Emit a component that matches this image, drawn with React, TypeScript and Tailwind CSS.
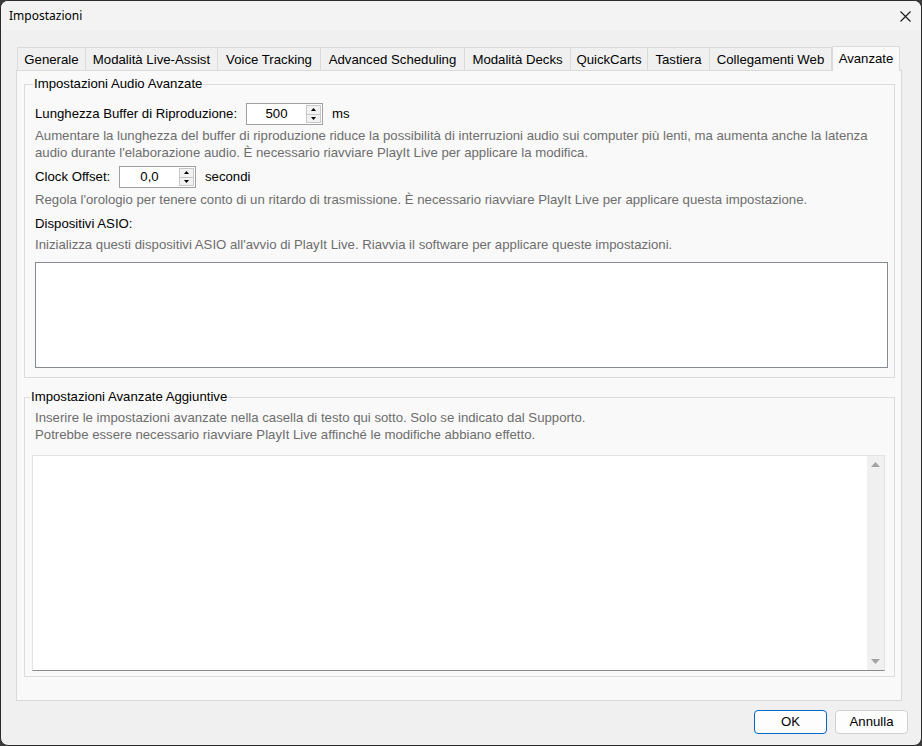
import React from "react";

const tabs: { label: string; w: number }[] = [
  { label: "Generale", w: 69 },
  { label: "Modalità Live-Assist", w: 132 },
  { label: "Voice Tracking", w: 103 },
  { label: "Advanced Scheduling", w: 144 },
  { label: "Modalità Decks", w: 106 },
  { label: "QuickCarts", w: 77 },
  { label: "Tastiera", w: 62 },
  { label: "Collegamenti Web", w: 122 },
];

function Arrow({ up, color = "#000", w = 7, h = 4 }: { up: boolean; color?: string; w?: number; h?: number }) {
  return (
    <svg width={w} height={h} viewBox={`0 0 ${w} ${h}`}>
      {up ? (
        <polygon points={`${w / 2},0 ${w},${h} 0,${h}`} fill={color} />
      ) : (
        <polygon points={`0,0 ${w},0 ${w / 2},${h}`} fill={color} />
      )}
    </svg>
  );
}

function Spin({ value }: { value: string }) {
  return (
    <div className="flex h-[22px] w-[77px] border border-[#a0a0a0] bg-white">
      <div className="flex flex-1 items-center justify-center text-black">{value}</div>
      <div className="my-[1px] mr-[1px] flex w-[15px] flex-col">
        <div className="flex flex-1 items-center justify-center border border-[#c8c8c8] bg-[#f2f2f2]">
          <Arrow up w={5} h={3} />
        </div>
        <div className="flex flex-1 items-center justify-center border border-t-0 border-[#c8c8c8] bg-[#f2f2f2]">
          <Arrow up={false} w={5} h={3} />
        </div>
      </div>
    </div>
  );
}

export default function App() {
  return (
    <div className="h-[746px] w-[922px] bg-[#3a3a3a] font-['Liberation_Sans',Arial,sans-serif] text-[13.2px] text-black">
      <div className="flex h-full flex-col overflow-hidden rounded-[8px] border border-[#2b2b2b] bg-[#f0f0f0]">
        {/* Title bar */}
        <div className="flex h-[30px] items-center justify-between bg-[#f3f3f3] pl-[8px] pr-[10px]">
          <span className="font-['Noto_Sans',sans-serif] text-[12px] leading-none text-black">Impostazioni</span>
          <svg width="11" height="11" viewBox="0 0 11 11">
            <path d="M0.5 0.5 L10.5 10.5 M10.5 0.5 L0.5 10.5" stroke="#1a1a1a" strokeWidth="1.1" fill="none" />
          </svg>
        </div>

        {/* Body */}
        <div className="flex flex-1 flex-col px-[15px] pt-[14px]">
          {/* Tabs */}
          <div className="relative z-10 flex h-[25px] items-end pl-[1px]">
            {tabs.map((t, i) => (
              <div
                key={t.label}
                style={{ width: t.w }}
                className={
                  "flex h-[23px] items-center justify-center border-t border-r border-[#dadada] bg-[#f0f0f0] pt-[1px] leading-none " +
                  (i === 0 ? "border-l" : "")
                }
              >
                {t.label}
              </div>
            ))}
            <div className="-mb-[1px] flex h-[25px] w-[68px] items-start justify-center border-x border-t border-[#dadada] bg-[#f9f9f9] pt-[5px] leading-none">
              Avanzate
            </div>
          </div>

          {/* Panel */}
          <div className="flex h-[631px] w-[886px] flex-col border border-[#dadada] bg-[#f9f9f9] pl-[7px] pr-[6px] pt-[5px]">
            {/* Group 1 */}
            <fieldset className="border border-[#dcdcdc] pb-[9px] pl-[10px] pr-[6px]">
              <legend className="ml-[-2px] px-[1px] leading-[16px]">Impostazioni Audio Avanzate</legend>
              <div className="mt-[11px] flex h-[22px] items-center">
                <span className="w-[211px]">Lunghezza Buffer di Riproduzione:</span>
                <Spin value="500" />
                <span className="ml-[9px]">ms</span>
              </div>
              <p className="mt-[2px] leading-[17px] text-[#6d6d6d]">
                Aumentare la lunghezza del buffer di riproduzione riduce la possibilità di interruzioni audio sui computer più lenti, ma aumenta anche la latenza
                <br />
                audio durante l'elaborazione audio. È necessario riavviare PlayIt Live per applicare la modifica.
              </p>
              <div className="mt-[5px] flex h-[22px] items-center">
                <span className="w-[84px]">Clock Offset:</span>
                <Spin value="0,0" />
                <span className="ml-[9px]">secondi</span>
              </div>
              <p className="mt-[3px] leading-[17px] text-[#6d6d6d]">
                Regola l'orologio per tenere conto di un ritardo di trasmissione. È necessario riavviare PlayIt Live per applicare questa impostazione.
              </p>
              <p className="mt-[7px] leading-[17px]">Dispositivi ASIO:</p>
              <p className="mt-[4px] leading-[17px] text-[#6d6d6d]">
                Inizializza questi dispositivi ASIO all'avvio di PlayIt Live. Riavvia il software per applicare queste impostazioni.
              </p>
              <div className="mt-[9px] h-[106px] border border-[#868a91] bg-white" />
            </fieldset>

            {/* Group 2 */}
            <fieldset className="mt-[11px] border border-[#dcdcdc] pb-[5px] pl-[7px] pr-[9px]">
              <legend className="ml-[-2px] px-[1px] leading-[16px]">Impostazioni Avanzate Aggiuntive</legend>
              <p className="mt-[5px] pl-[3px] leading-[16.5px] text-[#6d6d6d]">
                Inserire le impostazioni avanzate nella casella di testo qui sotto. Solo se indicato dal Supporto.
                <br />
                Potrebbe essere necessario riavviare PlayIt Live affinché le modifiche abbiano effetto.
              </p>
              <div className="mt-[12px] flex h-[216px] border border-[#e3e3e3] border-b-[#8a8a8a] bg-white">
                <div className="flex-1" />
                <div className="flex w-[17px] flex-col items-center justify-between bg-[#f0f0f0] pb-[6px] pt-[6px]">
                  <Arrow up color="#a3a3a3" w={9} h={5} />
                  <Arrow up={false} color="#a3a3a3" w={9} h={5} />
                </div>
              </div>
            </fieldset>
          </div>

          {/* Buttons */}
          <div className="mr-[-2px] mt-[9px] flex justify-end gap-[8px]">
            <button className="flex h-[24px] w-[73px] items-center justify-center rounded-[4px] border border-[#0067c0] bg-[#fdfdfd] leading-none">
              OK
            </button>
            <button className="flex h-[24px] w-[73px] items-center justify-center rounded-[4px] border border-[#d0d0d0] bg-[#fdfdfd] leading-none">
              Annulla
            </button>
          </div>
        </div>
      </div>
    </div>
  );
}
